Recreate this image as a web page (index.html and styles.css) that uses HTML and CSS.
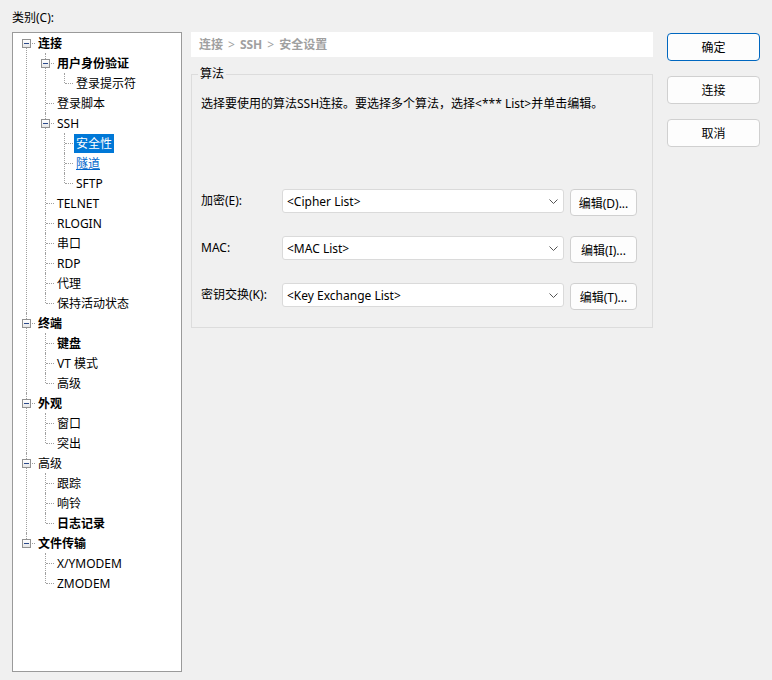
FILE: index.html
```html
<!DOCTYPE html>
<html lang="zh-CN">
<head>
    <meta charset="UTF-8">
    <title>会话选项</title>
    <link rel="stylesheet" href="styles.css">
</head>
<body>
    <div class="dialog">
        <div class="category">
            <div class="category-label">类别(C):</div>
            <ul class="tree">
                <li class="first">
                    <div class="node"><span class="toggle"></span><span class="text bold">连接</span></div>
                    <ul>
                        <li>
                            <div class="node"><span class="toggle"></span><span class="text bold">用户身份验证</span></div>
                            <ul>
                                <li class="last"><div class="node"><span class="text">登录提示符</span></div></li>
                            </ul>
                        </li>
                        <li><div class="node"><span class="text">登录脚本</span></div></li>
                        <li>
                            <div class="node"><span class="toggle"></span><span class="text">SSH</span></div>
                            <ul>
                                <li><div class="node"><span class="text selected">安全性</span></div></li>
                                <li><div class="node"><span class="text link">隧道</span></div></li>
                                <li class="last"><div class="node"><span class="text">SFTP</span></div></li>
                            </ul>
                        </li>
                        <li><div class="node"><span class="text">TELNET</span></div></li>
                        <li><div class="node"><span class="text">RLOGIN</span></div></li>
                        <li><div class="node"><span class="text">串口</span></div></li>
                        <li><div class="node"><span class="text">RDP</span></div></li>
                        <li><div class="node"><span class="text">代理</span></div></li>
                        <li class="last"><div class="node"><span class="text">保持活动状态</span></div></li>
                    </ul>
                </li>
                <li>
                    <div class="node"><span class="toggle"></span><span class="text bold">终端</span></div>
                    <ul>
                        <li><div class="node"><span class="text bold">键盘</span></div></li>
                        <li><div class="node"><span class="text">VT 模式</span></div></li>
                        <li class="last"><div class="node"><span class="text">高级</span></div></li>
                    </ul>
                </li>
                <li>
                    <div class="node"><span class="toggle"></span><span class="text bold">外观</span></div>
                    <ul>
                        <li><div class="node"><span class="text">窗口</span></div></li>
                        <li class="last"><div class="node"><span class="text">突出</span></div></li>
                    </ul>
                </li>
                <li>
                    <div class="node"><span class="toggle"></span><span class="text">高级</span></div>
                    <ul>
                        <li><div class="node"><span class="text">跟踪</span></div></li>
                        <li><div class="node"><span class="text">响铃</span></div></li>
                        <li class="last"><div class="node"><span class="text bold">日志记录</span></div></li>
                    </ul>
                </li>
                <li class="last">
                    <div class="node"><span class="toggle"></span><span class="text bold">文件传输</span></div>
                    <ul>
                        <li><div class="node"><span class="text">X/YMODEM</span></div></li>
                        <li class="last"><div class="node"><span class="text">ZMODEM</span></div></li>
                    </ul>
                </li>
            </ul>
        </div>

        <div class="main">
            <div class="crumb">
                <b>连接</b><span class="sep">&gt;</span><b>SSH</b><span class="sep">&gt;</span><b>安全设置</b>
            </div>
            <fieldset class="group">
                <legend>算法</legend>
                <div class="desc">选择要使用的算法SSH连接。要选择多个算法，选择&lt;*** List&gt;并单击编辑。</div>
                <div class="rows">
                    <div class="row">
                        <label>加密(E):</label>
                        <div class="combo"><span>&lt;Cipher List&gt;</span>
                            <svg width="9" height="5" viewBox="0 0 9 5"><path d="M0.5 0.5 L4.5 4.5 L8.5 0.5" fill="none" stroke="#555" stroke-width="1"/></svg>
                        </div>
                        <button class="btn">编辑(D)...</button>
                    </div>
                    <div class="row">
                        <label>MAC:</label>
                        <div class="combo"><span>&lt;MAC List&gt;</span>
                            <svg width="9" height="5" viewBox="0 0 9 5"><path d="M0.5 0.5 L4.5 4.5 L8.5 0.5" fill="none" stroke="#555" stroke-width="1"/></svg>
                        </div>
                        <button class="btn">编辑(I)...</button>
                    </div>
                    <div class="row">
                        <label>密钥交换(K):</label>
                        <div class="combo"><span>&lt;Key Exchange List&gt;</span>
                            <svg width="9" height="5" viewBox="0 0 9 5"><path d="M0.5 0.5 L4.5 4.5 L8.5 0.5" fill="none" stroke="#555" stroke-width="1"/></svg>
                        </div>
                        <button class="btn">编辑(T)...</button>
                    </div>
                </div>
            </fieldset>
        </div>

        <div class="side">
            <button class="btn big default">确定</button>
            <button class="btn big">连接</button>
            <button class="btn big">取消</button>
        </div>
    </div>
</body>
</html>
```

FILE: styles.css
```css
body {
    margin: 0;
    background: #f0f0f0;
    font-family: "Noto Sans", "Noto Sans CJK SC", sans-serif;
    font-size: 12px;
    color: #000;
}
.dialog {
    display: flex;
    align-items: flex-start;
    padding: 8px 12px 0 12px;
}

/* left: category tree */
.category {
    width: 170px;
}
.category-label {
    height: 20px;
    line-height: 20px;
    margin-bottom: 4px;
}
.tree {
    height: 640px;
    box-sizing: border-box;
    border: 1px solid #9a9a9a;
    background: #fff;
}
.tree, .tree ul {
    list-style: none;
    margin: 0;
    padding: 0;
}
.tree ul {
    padding-left: 19px;
}
.tree li {
    position: relative;
}
.tree li::before {
    content: "";
    position: absolute;
    left: 13px;
    top: 0;
    bottom: 0;
    border-left: 1px dotted #a0a0a0;
}
.tree li.first::before {
    top: 10px;
}
.tree li.last::before {
    bottom: auto;
    height: 10px;
}
.tree li::after {
    content: "";
    position: absolute;
    left: 14px;
    top: 10px;
    width: 8px;
    border-top: 1px dotted #a0a0a0;
}
.node {
    display: flex;
    align-items: center;
    height: 20px;
    padding-left: 23px;
}
.toggle {
    position: relative;
    z-index: 1;
    width: 9px;
    height: 9px;
    box-sizing: border-box;
    margin-left: -14px;
    margin-right: 5px;
    border: 1px solid #919191;
    background: linear-gradient(#fff, #e6e6e6);
}
.toggle::before {
    content: "";
    position: absolute;
    left: 1px;
    top: 3px;
    width: 5px;
    height: 1px;
    background: #2b4a8a;
}
.text {
    position: relative;
    z-index: 1;
    display: inline-block;
    height: 19px;
    line-height: 19px;
    padding: 0 2px;
    white-space: nowrap;
}
.text.bold {
    font-weight: bold;
}
.text.selected {
    background: #0078d7;
    color: #fff;
}
.text.link {
    color: #0066cc;
    text-decoration: underline;
}

/* middle: settings page */
.main {
    width: 462px;
    margin-left: 9px;
    padding-top: 24px;
}
.crumb {
    height: 25px;
    line-height: 25px;
    padding-left: 8px;
    background: #fff;
    color: #a0a0a0;
}
.crumb .sep {
    margin: 0 5px;
}
.group {
    margin: 7px 0 0 0;
    padding: 0 9px 17px 9px;
    border: 1px solid #dcdcdc;
}
.group legend {
    margin-left: -3px;
    padding: 0 2px;
    line-height: 20px;
}
.desc {
    margin-top: 10px;
    line-height: 20px;
}
.rows {
    margin-top: 75px;
    display: flex;
    flex-direction: column;
    gap: 20px;
}
.row {
    display: flex;
    align-items: flex-start;
}
.row label {
    width: 81px;
    line-height: 24px;
}
.combo {
    display: flex;
    align-items: center;
    justify-content: space-between;
    width: 282px;
    height: 24px;
    box-sizing: border-box;
    padding: 0 5px 0 4px;
    background: #fff;
    border: 1px solid #dadada;
    border-radius: 3px;
}
.btn {
    width: 67px;
    height: 27px;
    margin-left: 6px;
    padding: 0;
    font: inherit;
    color: #000;
    background: #fdfdfd;
    border: 1px solid #d0d0d0;
    border-radius: 4px;
}

/* right: dialog buttons */
.side {
    display: flex;
    flex-direction: column;
    gap: 15px;
    margin-left: 14px;
    padding-top: 25px;
}
.btn.big {
    width: 93px;
    height: 28px;
    margin-left: 0;
}
.btn.default {
    border-color: #0067c0;
}
```
